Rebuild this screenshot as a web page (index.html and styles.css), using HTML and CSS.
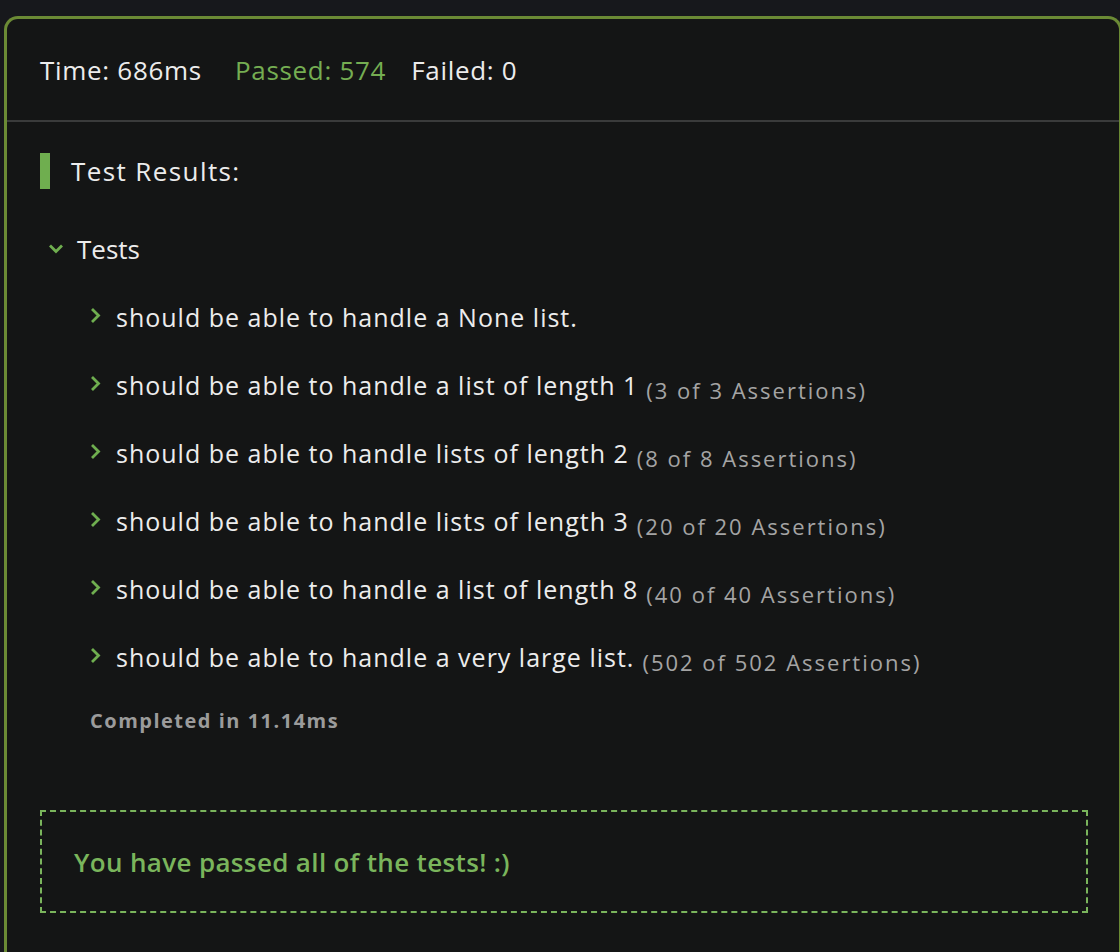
FILE: index.html
```html
<!DOCTYPE html>
<html>
<head>
<meta charset="utf-8">
<link rel="stylesheet" href="styles.css">
</head>
<body>
<div class="panel">
  <div class="summary">
    <span class="stat">Time: 686ms</span>
    <span class="stat passed">Passed: 574</span>
    <span class="stat failed">Failed: 0</span>
  </div>
  <div class="content">
    <h2 class="results-title">Test Results:</h2>
    <div class="group">
      <div class="group-head">
        <svg class="chev-down" width="16" height="10" viewBox="0 0 16 10"><path d="M2 1.5 L8 7.5 L14 1.5" fill="none" stroke="#6fae4f" stroke-width="2.8"/></svg>
        <span>Tests</span>
      </div>
      <ul class="items">
        <li class="item"><svg class="chev" width="11" height="17" viewBox="0 0 11 17"><path d="M2 2 L8.5 8.5 L2 15" fill="none" stroke="#6fae4f" stroke-width="2.8"/></svg><span class="name">should be able to handle a None list.</span></li>
        <li class="item"><svg class="chev" width="11" height="17" viewBox="0 0 11 17"><path d="M2 2 L8.5 8.5 L2 15" fill="none" stroke="#6fae4f" stroke-width="2.8"/></svg><span class="name">should be able to handle a list of length 1</span><span class="count">(3 of 3 Assertions)</span></li>
        <li class="item"><svg class="chev" width="11" height="17" viewBox="0 0 11 17"><path d="M2 2 L8.5 8.5 L2 15" fill="none" stroke="#6fae4f" stroke-width="2.8"/></svg><span class="name">should be able to handle lists of length 2</span><span class="count">(8 of 8 Assertions)</span></li>
        <li class="item"><svg class="chev" width="11" height="17" viewBox="0 0 11 17"><path d="M2 2 L8.5 8.5 L2 15" fill="none" stroke="#6fae4f" stroke-width="2.8"/></svg><span class="name">should be able to handle lists of length 3</span><span class="count">(20 of 20 Assertions)</span></li>
        <li class="item"><svg class="chev" width="11" height="17" viewBox="0 0 11 17"><path d="M2 2 L8.5 8.5 L2 15" fill="none" stroke="#6fae4f" stroke-width="2.8"/></svg><span class="name">should be able to handle a list of length 8</span><span class="count">(40 of 40 Assertions)</span></li>
        <li class="item"><svg class="chev" width="11" height="17" viewBox="0 0 11 17"><path d="M2 2 L8.5 8.5 L2 15" fill="none" stroke="#6fae4f" stroke-width="2.8"/></svg><span class="name">should be able to handle a very large list.</span><span class="count">(502 of 502 Assertions)</span></li>
      </ul>
      <div class="completed">Completed in 11.14ms</div>
    </div>
    <div class="success">You have passed all of the tests! :)</div>
  </div>
</div>
</body>
</html>
```
FILE: styles.css
```css
html, body {
  margin: 0;
  padding: 0;
  overflow: hidden;
}
body {
  background: #17181c;
  font-family: "Open Sans", "Noto Sans", sans-serif;
  color: #ececec;
  width: 1120px;
  height: 952px;
}
.panel {
  margin: 16px 0 0 4px;
  width: 1118px;
  height: 960px;
  box-sizing: border-box;
  background: #141515;
  border: 3px solid #6b8a35;
  border-bottom: none;
  border-radius: 14px 14px 0 0;
}
.summary {
  height: 103px;
  box-sizing: border-box;
  display: flex;
  align-items: center;
  padding: 0 0 0 33px;
  border-bottom: 2px solid #3a3b3b;
  font-size: 26px;
  letter-spacing: 0.7px;
}
.stat.passed { color: #75ad52; margin-left: 33px; }
.stat.failed { margin-left: 25px; }
.content {
  padding: 31px 0 0 33px;
}
.results-title {
  margin: 0;
  display: flex;
  align-items: center;
  height: 36px;
  border-left: 10px solid #6fae4f;
  padding-left: 21px;
  font-weight: 400;
  font-size: 26px;
  letter-spacing: 1.4px;
}
.group { margin-top: 45px; }
.group-head {
  display: flex;
  align-items: center;
  gap: 13px;
  font-size: 26px;
  line-height: 30px;
  padding-left: 8px;
  height: 30px;
}
.items {
  list-style: none;
  margin: 38px 0 0 0;
  padding: 0 0 0 50px;
  display: flex;
  flex-direction: column;
  gap: 38px;
}
.item {
  display: flex;
  align-items: baseline;
  height: 30px;
  line-height: 30px;
  font-size: 25px;
  letter-spacing: 1px;
}
.chev {
  flex: none;
  margin-right: 15px;
  align-self: flex-start;
  margin-top: 5px;
}
.count {
  color: #a4a4a4;
  font-size: 22px;
  letter-spacing: 2px;
  margin-left: 8px;
  position: relative;
  top: 4px;
}
.completed {
  margin: 37px 0 0 50px;
  font-size: 20px;
  line-height: 24px;
  font-weight: 700;
  color: #9b9b9b;
  letter-spacing: 1.5px;
}
.success {
  margin: 77px 0 0 0;
  width: 1048px;
  height: 103px;
  box-sizing: border-box;
  border: 2px dashed #7ab55c;
  display: flex;
  align-items: center;
  padding-left: 32px;
  font-size: 26px;
  font-weight: 600;
  letter-spacing: 0.35px;
  color: #7ab55c;
}
```
